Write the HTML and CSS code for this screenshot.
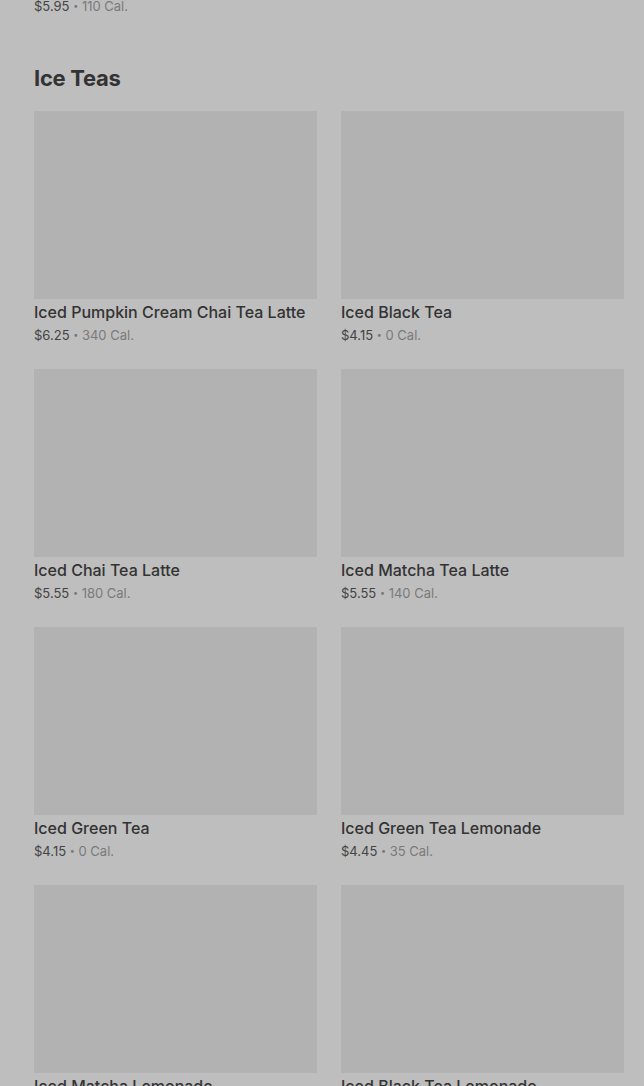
FILE: index.html
```html
<!DOCTYPE html>
<html>
<head>
<meta charset="utf-8">
<link rel="stylesheet" href="styles.css">
</head>
<body>
<div class="page">
  <div class="prev">
    <div class="meta"><span class="price">$5.95</span> <span class="dot">•</span> <span class="cal">110 Cal.</span></div>
  </div>
  <h2 class="section-title">Ice Teas</h2>
  <div class="grid">
    <div class="card"><div class="thumb"></div><div class="name">Iced Pumpkin Cream Chai Tea Latte</div><div class="meta"><span class="price">$6.25</span> <span class="dot">•</span> <span class="cal">340 Cal.</span></div></div>
    <div class="card"><div class="thumb"></div><div class="name">Iced Black Tea</div><div class="meta"><span class="price">$4.15</span> <span class="dot">•</span> <span class="cal">0 Cal.</span></div></div>
    <div class="card"><div class="thumb"></div><div class="name">Iced Chai Tea Latte</div><div class="meta"><span class="price">$5.55</span> <span class="dot">•</span> <span class="cal">180 Cal.</span></div></div>
    <div class="card"><div class="thumb"></div><div class="name">Iced Matcha Tea Latte</div><div class="meta"><span class="price">$5.55</span> <span class="dot">•</span> <span class="cal">140 Cal.</span></div></div>
    <div class="card"><div class="thumb"></div><div class="name">Iced Green Tea</div><div class="meta"><span class="price">$4.15</span> <span class="dot">•</span> <span class="cal">0 Cal.</span></div></div>
    <div class="card"><div class="thumb"></div><div class="name">Iced Green Tea Lemonade</div><div class="meta"><span class="price">$4.45</span> <span class="dot">•</span> <span class="cal">35 Cal.</span></div></div>
    <div class="card"><div class="thumb"></div><div class="name">Iced Matcha Lemonade</div><div class="meta"><span class="price">$4.95</span> <span class="dot">•</span> <span class="cal">130 Cal.</span></div></div>
    <div class="card"><div class="thumb"></div><div class="name">Iced Black Tea Lemonade</div><div class="meta"><span class="price">$4.45</span> <span class="dot">•</span> <span class="cal">35 Cal.</span></div></div>
  </div>
</div>
</body>
</html>
```
FILE: styles.css
```css
html, body {
  margin: 0;
  padding: 0;
  background: #bebebe;
  font-family: Inter, "Noto Sans", "Liberation Sans", sans-serif;
  color: #333;
  overflow: hidden;
}
.page {
  padding: 0 20px 0 34px;
}
.prev {
  margin-top: -3px;
}
.meta {
  font-size: 13px;
  line-height: 18px;
  color: #444;
}
.meta .dot {
  font-size: 9px;
  color: #777;
  vertical-align: 2px;
}
.meta .cal {
  color: #7a7a7a;
}
.section-title {
  margin: 49px 0 0;
  font-size: 22px;
  line-height: 28px;
  font-weight: 700;
  letter-spacing: -0.3px;
  color: #333;
}
.grid {
  display: grid;
  grid-template-columns: 283px 283px;
  column-gap: 24px;
  row-gap: 25px;
  margin-top: 19px;
}
.thumb {
  height: 188px;
  background: #b2b2b2;
}
.name {
  margin-top: 3px;
  font-size: 16px;
  line-height: 20px;
  font-weight: 500;
  color: #333;
}
.meta {
  margin-top: 4px;
}
.prev .meta { margin-top: 0; }
```
